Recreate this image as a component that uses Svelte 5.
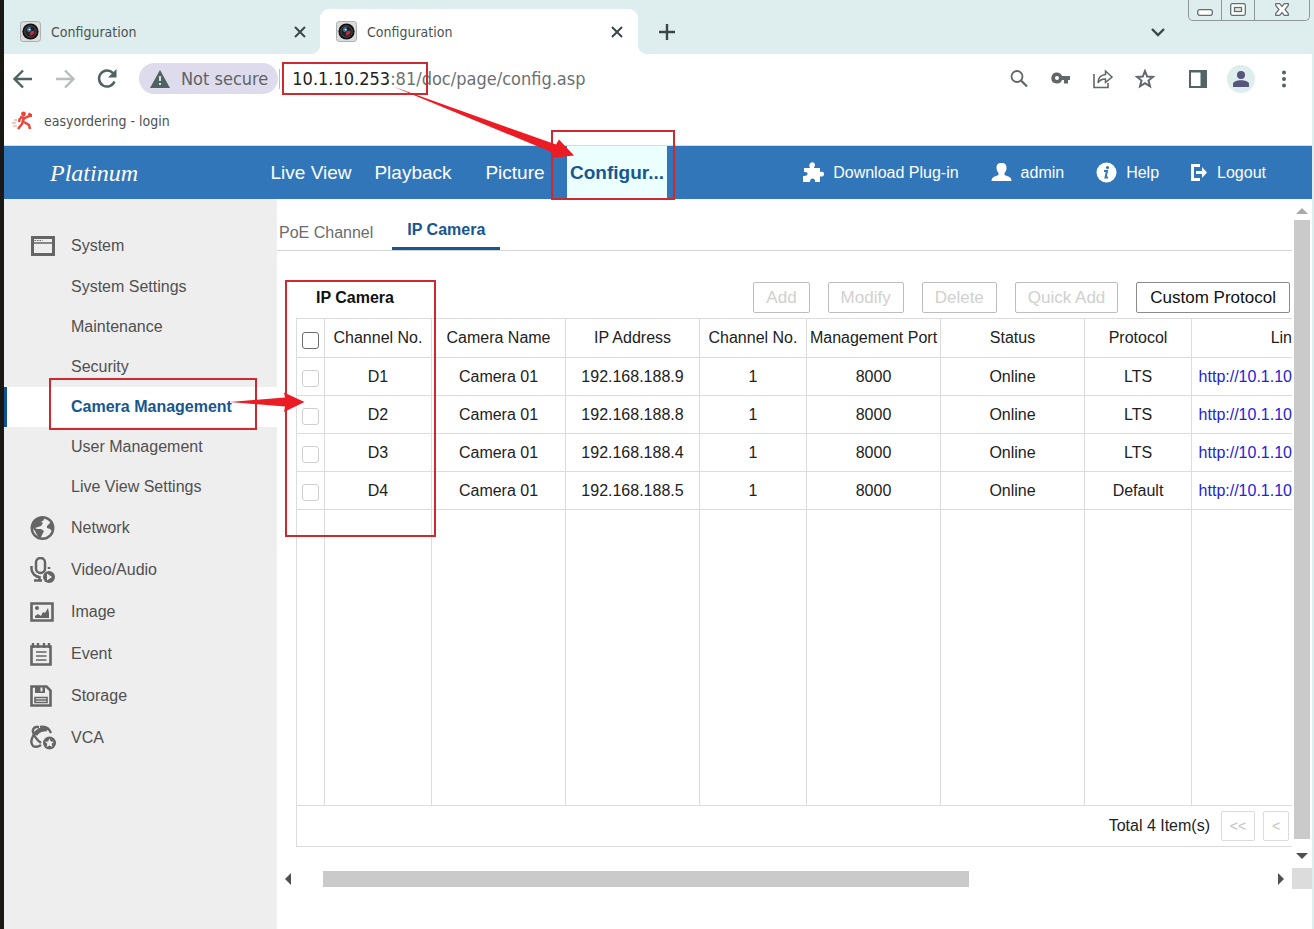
<script lang="ts">
    interface Camera {
        channel: string;
        name: string;
        address: string;
        remote: number;
        port: number;
        status: string;
        protocol: string;
        link: string;
    }

    const navItems = ["Live View", "Playback", "Picture", "Configur..."];
    const tools = [
        { icon: "plugin", label: "Download Plug-in" },
        { icon: "user", label: "admin" },
        { icon: "help", label: "Help" },
        { icon: "logout", label: "Logout" },
    ];
    const systemItems = [
        "System Settings",
        "Maintenance",
        "Security",
        "Camera Management",
        "User Management",
        "Live View Settings",
    ];
    const sections = [
        { icon: "network", label: "Network" },
        { icon: "audio", label: "Video/Audio" },
        { icon: "image", label: "Image" },
        { icon: "event", label: "Event" },
        { icon: "storage", label: "Storage" },
        { icon: "vca", label: "VCA" },
    ];
    const actions = ["Add", "Modify", "Delete", "Quick Add"];
    const columns = ["Channel No.", "Camera Name", "IP Address", "Channel No.", "Management Port", "Status", "Protocol", "Lin"];
    const cameras: Camera[] = [
        { channel: "D1", name: "Camera 01", address: "192.168.188.9", remote: 1, port: 8000, status: "Online", protocol: "LTS", link: "http://10.1.10" },
        { channel: "D2", name: "Camera 01", address: "192.168.188.8", remote: 1, port: 8000, status: "Online", protocol: "LTS", link: "http://10.1.10" },
        { channel: "D3", name: "Camera 01", address: "192.168.188.4", remote: 1, port: 8000, status: "Online", protocol: "LTS", link: "http://10.1.10" },
        { channel: "D4", name: "Camera 01", address: "192.168.188.5", remote: 1, port: 8000, status: "Online", protocol: "Default", link: "http://10.1.10" },
    ];

    let activeNav = $state("Configur...");
    let activeItem = $state("Camera Management");
</script>

{#snippet favicon()}
    <svg class="favicon" viewBox="0 0 22 22" aria-hidden="true">
        <rect x="0.5" y="0.5" width="21" height="21" rx="3" fill="#dcdcdc" stroke="#a8acac" />
        <circle cx="11" cy="11" r="8.5" fill="#111" />
        <circle cx="11" cy="11" r="6" fill="#1c1f24" stroke="#55585c" stroke-width="1" />
        <path d="M7 10a4 4 0 0 1 4-4l1 4-3 2z" fill="#3e6c8d" />
        <path d="M11 11l4-1a4 4 0 0 1-5 5z" fill="#b7343a" />
        <circle cx="10" cy="9" r="1" fill="#d9e6ee" />
    </svg>
{/snippet}

{#snippet cross()}
    <svg width="12" height="12" viewBox="0 0 12 12" aria-hidden="true">
        <path d="M1 1l10 10m0-10L1 11" stroke="#3c4646" stroke-width="2" />
    </svg>
{/snippet}

{#snippet icon(name: string)}
    <svg class="icon" viewBox="0 0 26 26" aria-hidden="true">
        {#if name === "system"}
            <path d="M2.500 4.500h21v17h-21z" fill="none" stroke="#656565" stroke-width="3" />
            <path d="M3 10h20" stroke="#656565" stroke-width="1.500" />
            <path d="M4.500 7.500h8" stroke="#656565" stroke-dasharray="1.500 1" />
        {:else if name === "network"}
            <circle cx="12.500" cy="13" r="10.700" fill="none" stroke="#656565" stroke-width="2.500" />
            <path d="M2 12l1-5 5-4 5-1 1 3-3 2 2 1-2 3-3 1-3 1 2 1h4l3 2-2 4-2 4-3-4-2-4z" fill="#656565" />
            <path d="M17 11l4-4 2 4-1 5-2-2-3-1z" fill="#656565" />
        {:else if name === "audio"}
            <rect x="6" y="1" width="9" height="15" rx="4.500" fill="none" stroke="#656565" stroke-width="2.500" />
            <path d="M1.500 9v3c0 4 4 8 8 8M19 10v2M4 23.500h8M9.500 19v4" fill="none" stroke="#656565" stroke-width="2.500" />
            <circle cx="19" cy="20" r="6" fill="#656565" />
            <path d="M17 16.500l5 3.500-5 3.500z" fill="#eee" />
        {:else if name === "image"}
            <path d="M1.500 4.500h21v17h-21z" fill="none" stroke="#656565" stroke-width="2.600" />
            <circle cx="7" cy="9" r="2" fill="#656565" />
            <path d="M5 19v-2l3-2 3 2 2-4 2 1 3-5 1 5v5z" fill="#656565" />
        {:else if name === "event"}
            <path d="M1.500 5.500h19v18h-19z" fill="none" stroke="#656565" stroke-width="2.600" />
            <path d="M3 2v5M8 2v5M14 2v5M19 2v5" stroke="#656565" stroke-width="2.400" />
            <path d="M6 11h10.500M6 15h10.500M6 19h10.500" stroke="#656565" stroke-width="1.600" />
        {:else if name === "storage"}
            <path d="M1.500 3.500h15l4 4v15h-19z" fill="none" stroke="#656565" stroke-width="2.600" />
            <path d="M5 3h10v7H5z" fill="#656565" />
            <path d="M10.500 4.500h2v4h-2z" fill="#eee" />
            <path d="M5 14.500h12v5H5zM5 17h12" fill="none" stroke="#656565" stroke-width="1.600" />
        {:else if name === "vca"}
            <path d="M9 2H6a4 4 0 0 0-3 5c1 4 4 8 8 11M18 4c-6-3-13 2-15 7-2 4-2 8 0 10 2 1 5 1 8-1M10 2c5-1 9 1 11 6M6 10c2-3 6-5 11-5" fill="none" stroke="#656565" stroke-width="2.400" />
            <circle cx="19.500" cy="18" r="6.500" fill="#656565" />
            <path d="M19.500 13.500l1.400 2.900 3.100.3-2.300 2.100.7 3.200-2.900-1.600-2.900 1.600.7-3.200-2.300-2.100 3.100-.3z" fill="#eee" />
        {/if}
    </svg>
{/snippet}

{#snippet toolIcon(name: string)}
    {#if name === "plugin"}
        <svg width="21" height="21" viewBox="0 0 21 21" fill="#fff" aria-hidden="true">
            <path d="M1 6h6c-3-6 5-8 5-3 0 1-1 2-1 3h6v4c1 0 4-1 4 2s-3 3-4 2v6h-5c1-4-5-5-5 0H0v-6c6 1 6-5 1-4z" />
        </svg>
    {:else if name === "user"}
        <svg width="21" height="21" viewBox="0 0 21 21" fill="#fff" aria-hidden="true">
            <path d="M10.500 1c4 0 5 2 5 5 0 2-1 4-2 5v2l5 2q2 1 2 4H.5q0-3 2-4l5-2v-2c-1-1-2-3-2-5 0-3 1-5 5-5z" />
        </svg>
    {:else if name === "help"}
        <svg width="21" height="21" viewBox="0 0 21 21" aria-hidden="true">
            <circle cx="10.500" cy="10.500" r="10" fill="#fff" />
            <circle cx="11.500" cy="5.500" r="1.600" fill="#3276ba" />
            <path d="M8 9h3l-1.500 6.500H12" fill="none" stroke="#3276ba" stroke-width="2" />
        </svg>
    {:else}
        <svg width="17" height="21" viewBox="0 0 17 21" fill="#fff" aria-hidden="true">
            <path d="M0 2h9v3H3v11h6v3H0z" />
            <path d="M5 9h6V5l5 5.500-5 5.500v-4H5z" />
        </svg>
    {/if}
{/snippet}

<div class="window">
    <header class="tabstrip">
        <div class="browser-tab">
            {@render favicon()}
            <span>Configuration</span>
            <button class="plain" aria-label="Close tab">{@render cross()}</button>
        </div>
        <div class="browser-tab current">
            {@render favicon()}
            <span>Configuration</span>
            <button class="plain" aria-label="Close tab">{@render cross()}</button>
        </div>
        <button class="plain new-tab" aria-label="New tab">
            <svg width="16" height="16" viewBox="0 0 16 16"><path d="M8 0v16M0 8h16" stroke="#3c4646" stroke-width="2.400" /></svg>
        </button>
        <button class="plain search-tabs" aria-label="Search tabs">
            <svg width="14" height="10" viewBox="0 0 14 10"><path d="M1 2l6 6 6-6" fill="none" stroke="#3c4646" stroke-width="2.400" /></svg>
        </button>
        <div class="window-controls">
            <button aria-label="Minimize">
                <svg width="16" height="7" viewBox="0 0 16 7"><rect x="0.700" y="0.700" width="14.600" height="5.600" rx="2" fill="#fff" stroke="#666d6d" stroke-width="1.300" /></svg>
            </button>
            <button aria-label="Restore">
                <svg width="16" height="13" viewBox="0 0 16 13"><rect x="0.700" y="0.700" width="14.600" height="11.600" rx="1.500" fill="#fff" stroke="#666d6d" stroke-width="1.300" /><rect x="4.500" y="4.500" width="7" height="4" fill="#deeeee" stroke="#666d6d" stroke-width="1.300" /></svg>
            </button>
            <button class="wide" aria-label="Close">
                <svg width="14" height="13" viewBox="0 0 14 13"><path d="M.7.7h4L7 3.500 9.300.7h4v1.800L10 6.500l3.300 4v1.800h-4L7 9.500l-2.300 2.800h-4v-1.800L4 6.500l-3.300-4z" fill="#fff" stroke="#666d6d" stroke-width="1.200" /></svg>
            </button>
        </div>
    </header>

    <div class="toolbar">
        <div class="history">
            <button class="plain" aria-label="Back">
                <svg width="20" height="20" viewBox="0 0 20 20"><path d="M19 10H2M10 1.500L1.500 10l8.500 8.500" fill="none" stroke="#4f6262" stroke-width="2.400" /></svg>
            </button>
            <button class="plain" aria-label="Forward">
                <svg width="20" height="20" viewBox="0 0 20 20"><path d="M1 10h17M10 1.500l8.500 8.500-8.500 8.500" fill="none" stroke="#b9bdbd" stroke-width="2.400" /></svg>
            </button>
            <button class="plain" aria-label="Reload">
                <svg width="20" height="20" viewBox="0 0 20 20"><path d="M17.500 12.500a8 8 0 1 1-1.500-8.300" fill="none" stroke="#4f6262" stroke-width="2.500" /><path d="M19.500 0v8.500H11z" fill="#4f6262" /></svg>
            </button>
        </div>
        <button class="security">
            <svg width="20" height="18" viewBox="0 0 20 18" aria-hidden="true"><path d="M10 0l10 18H0z" fill="#4f6262" /><path d="M10 6v5M10 13v2" stroke="#dedcec" stroke-width="2" /></svg>
            Not secure
        </button>
        <div class="address" role="textbox" tabindex="0" contenteditable="true" aria-label="Address"><span class="host">10.1.10.253</span>:81/doc/page/config.asp</div>
        <div class="browser-actions">
            <button class="plain" aria-label="Zoom">
                <svg width="20" height="20" viewBox="0 0 20 20"><circle cx="8" cy="7.500" r="5.500" fill="none" stroke="#616767" stroke-width="1.800" /><path d="M12 11.500l6 6" stroke="#616767" stroke-width="2.300" /></svg>
            </button>
            <button class="plain" aria-label="Passwords">
                <svg width="20" height="20" viewBox="0 0 20 20"><path d="M6 3.500a5.500 5.500 0 0 1 5 3.500h8v4h-2v3.500h-4V11h-2A5.500 5.500 0 1 1 6 3.500zM6 7a2 2 0 1 0 0 4 2 2 0 0 0 0-4z" fill="#616767" fill-rule="evenodd" /></svg>
            </button>
            <button class="plain" aria-label="Share">
                <svg width="20" height="20" viewBox="0 0 20 20"><path d="M1 5v13.500h14V14" fill="none" stroke="#616767" stroke-width="1.600" /><path d="M12.500 2l6.500 6-6.500 5.500V10c-4 0-6 1-7.500 4 0-5 3-8 7.500-8.500z" fill="none" stroke="#616767" stroke-width="1.500" /></svg>
            </button>
            <button class="plain" aria-label="Bookmark">
                <svg width="20" height="20" viewBox="0 0 20 20"><path d="M10 2l2.200 5.500 5.800.4-4.500 3.700 1.500 5.800-5-3.200-5 3.200 1.500-5.800L2 7.900l5.800-.4z" fill="none" stroke="#616767" stroke-width="2" /></svg>
            </button>
            <button class="plain spaced" aria-label="Side panel">
                <svg width="20" height="20" viewBox="0 0 20 20"><path d="M1 1h18v18H1z" fill="#526464" /><path d="M3 3.500h9.500v13.500H3z" fill="#fff" /></svg>
            </button>
            <button class="plain avatar" aria-label="Profile">
                <svg width="16" height="16" viewBox="0 0 16 16"><circle cx="8" cy="4" r="4" fill="#56567b" /><path d="M0 16v-3c0-5 16-5 16 0v3z" fill="#56567b" /></svg>
            </button>
            <button class="plain" aria-label="Menu">
                <svg width="20" height="20" viewBox="0 0 20 20" fill="#526464"><circle cx="10" cy="3.500" r="2" /><circle cx="10" cy="10" r="2" /><circle cx="10" cy="16.500" r="2" /></svg>
            </button>
        </div>
    </div>

    <div class="bookmarks">
        <a href="#login">
            <svg width="22" height="20" viewBox="0 0 22 20" aria-hidden="true">
                <circle cx="11.500" cy="3" r="2.400" fill="#e8453c" />
                <path d="M8 6l5 1 4-2 1-3M12 7l-2 6-4 5M12 11l5 3 1 4M8 7l-1 4" fill="none" stroke="#e8453c" stroke-width="2.500" />
                <path d="M16 3h4v3h-4z" fill="#e8453c" />
                <path d="M5 9H2M4 12H0M5 15H1" stroke="#f3b4ae" stroke-width="1.500" />
            </svg>
            easyordering - login
        </a>
    </div>

    <nav class="navbar">
        <div class="brand">Platinum</div>
        <div class="nav-items">
            {#each navItems as item}
                <a href="#nav" class:active={item === activeNav} onclick={() => activeNav = item}>{item}</a>
            {/each}
        </div>
        <div class="tools">
            {#each tools as tool}
                <a href="#tool">{@render toolIcon(tool.icon)}{tool.label}</a>
            {/each}
        </div>
    </nav>

    <div class="page">
        <aside>
            <a class="section" href="#system">{@render icon("system")}System</a>
            {#each systemItems as item}
                <a class="item" class:active={item === activeItem} href="#item" onclick={() => activeItem = item}>{item}</a>
            {/each}
            {#each sections as section}
                <a class="section" href="#section">{@render icon(section.icon)}{section.label}</a>
            {/each}
        </aside>

        <main>
            <div class="content">
                <div class="subtabs">
                    <a href="#poe">PoE Channel</a>
                    <a class="active" href="#ip">IP Camera</a>
                </div>

                <div class="panel">
                    <div class="panel-head">
                        <h2>IP Camera</h2>
                        {#each actions as action}
                            <button disabled>{action}</button>
                        {/each}
                        <button>Custom Protocol</button>
                    </div>

                    <table>
                        <colgroup>
                            <col class="check" />
                            <col class="narrow" />
                            <col class="medium" />
                            <col class="medium" />
                            <col class="narrow" />
                            <col class="medium" />
                            <col class="large" />
                            <col class="narrow" />
                            <col />
                        </colgroup>
                        <thead>
                            <tr>
                                <th><input type="checkbox" aria-label="Select all" /></th>
                                {#each columns as column}
                                    <th>{column}</th>
                                {/each}
                            </tr>
                        </thead>
                        <tbody>
                            {#each cameras as camera}
                                <tr>
                                    <td><input type="checkbox" disabled aria-label={camera.channel} /></td>
                                    <td>{camera.channel}</td>
                                    <td>{camera.name}</td>
                                    <td>{camera.address}</td>
                                    <td>{camera.remote}</td>
                                    <td>{camera.port}</td>
                                    <td>{camera.status}</td>
                                    <td>{camera.protocol}</td>
                                    <td><a href={camera.link}>{camera.link}</a></td>
                                </tr>
                            {/each}
                            <tr class="filler">
                                <td></td><td></td><td></td><td></td><td></td><td></td><td></td><td></td><td></td>
                            </tr>
                        </tbody>
                    </table>
                    <div class="pager">
                        <span>Total {cameras.length} Item(s)</span>
                        <button class="first" disabled>&lt;&lt;</button>
                        <button disabled>&lt;</button>
                    </div>
                </div>
            </div>

            <div class="scroll-y">
                <svg width="12" height="6" viewBox="0 0 12 6"><path d="M0 6l6-6 6 6z" fill="#a9a9a9" /></svg>
                <div class="thumb"></div>
                <svg width="12" height="6" viewBox="0 0 12 6"><path d="M0 0l6 6 6-6z" fill="#505050" /></svg>
            </div>
            <div class="scroll-x">
                <svg width="6" height="12" viewBox="0 0 6 12"><path d="M6 0L0 6l6 6z" fill="#505050" /></svg>
                <div class="track"><div class="thumb"></div></div>
                <svg width="6" height="12" viewBox="0 0 6 12"><path d="M0 0l6 6-6 6z" fill="#505050" /></svg>
            </div>
            <div class="corner"></div>
        </main>
    </div>

    <!-- callouts drawn over the page -->
    <svg class="callouts" width="1314" height="929" viewBox="0 0 1314 929" aria-hidden="true">
        <g fill="none" stroke="#cc2a30" stroke-width="2">
            <rect x="283" y="63" width="144" height="31" />
            <rect x="552" y="131" width="122" height="68" />
            <rect x="50" y="379" width="206" height="50" />
            <rect x="286" y="281" width="149" height="255" />
        </g>
        <g fill="#ec1c24">
            <path d="M393 86.500L556 144.500 559 139.500 574 155.500 552 158 552.500 152.500z" />
            <path d="M230 402L285 397.500 284 392.500 304.500 402 284 412 285 406.500z" />
        </g>
    </svg>
</div>

<style>

    :global(body) {
        margin: 0;
    }

    .window {
        position: relative;
        display: flex;
        flex-direction: column;
        box-sizing: border-box;
        min-height: 100vh;
        overflow: hidden;
        border-left: 4px solid #1a1814;
        border-right: 2px solid #deeeee;
        background: #fff;
        font: 16px/20px "Liberation Sans", Arial, sans-serif;
        color: #222;
    }

    a {
        color: inherit;
        text-decoration: none;
    }

    button {
        font: inherit;
        cursor: pointer;
    }

    svg {
        display: block;
        flex-shrink: 0;
    }

    .plain {
        display: flex;
        align-items: center;
        justify-content: center;
        padding: 0;
        border: 0;
        background: none;
    }

    .tabstrip,
    .toolbar,
    .bookmarks {
        font-family: "DejaVu Sans Condensed", Tahoma, "Noto Sans", sans-serif;
        color: #4b5252;
    }

    /* browser tabs */
    .tabstrip {
        display: flex;
        align-items: flex-end;
        height: 54px;
        background: #deeeee;
        font-size: 14px;
    }

    .browser-tab {
        display: flex;
        align-items: center;
        gap: 10px;
        box-sizing: border-box;
        width: 316px;
        height: 45px;
        padding: 0 14px 0 16px;
    }

    .browser-tab .plain {
        margin-left: auto;
    }

    .browser-tab.current {
        position: relative;
        width: 318px;
        padding-right: 15px;
        border-radius: 9px 9px 0 0;
        background: #fff;
    }

    .browser-tab.current::before,
    .browser-tab.current::after {
        content: '';
        position: absolute;
        bottom: 0;
        width: 9px;
        height: 9px;
    }

    .browser-tab.current::before {
        right: 100%;
        background: radial-gradient(circle at 0 0, #deeeee 9px, #fff 9px);
    }

    .browser-tab.current::after {
        left: 100%;
        background: radial-gradient(circle at 100% 0, #deeeee 9px, #fff 9px);
    }

    .favicon {
        width: 21px;
        height: 21px;
    }

    .new-tab {
        height: 45px;
        margin-left: 21px;
    }

    .search-tabs {
        height: 45px;
        margin-left: auto;
    }

    .window-controls {
        display: flex;
        align-self: flex-start;
        margin: 0 2px 0 23px;
        border: 1px solid #8e9898;
        border-top: 0;
        border-radius: 0 0 5px 5px;
    }

    .window-controls button {
        display: flex;
        align-items: flex-end;
        justify-content: center;
        width: 33px;
        height: 20px;
        padding: 0 0 4px;
        border: 0;
        border-right: 1px solid #8e9898;
        background: none;
    }

    .window-controls .wide {
        width: 54px;
        border-right: 0;
    }

    /* address row */
    .toolbar {
        display: flex;
        align-items: center;
        height: 49px;
        font-size: 18px;
    }

    .history {
        display: flex;
        gap: 22px;
        padding: 0 22px 0 9px;
    }

    .security {
        display: flex;
        align-items: center;
        gap: 11px;
        height: 31px;
        padding: 0 10px 0 11px;
        border: 0;
        border-radius: 16px;
        background: #dedcec;
        color: #5f6368;
        white-space: nowrap;
    }

    .address {
        flex: 1;
        margin-left: 1px;
        padding-left: 12px;
        border-left: 1px solid #b9bdc4;
        outline: 0;
        color: #6c7073;
        white-space: nowrap;
    }

    .host {
        color: #222;
    }

    .browser-actions {
        display: flex;
        align-items: center;
        gap: 22px;
        padding-right: 18px;
    }

    .spaced {
        margin-left: 11px;
    }

    .avatar {
        width: 28px;
        height: 28px;
        margin: 0 -3px;
        border-radius: 50%;
        background: #deeeee;
    }

    .bookmarks {
        height: 42px;
        border-bottom: 1px solid #d5dbe0;
        font-size: 14px;
    }

    .bookmarks a {
        display: flex;
        align-items: center;
        gap: 10px;
        height: 36px;
        padding-left: 8px;
    }

    /* application bar */
    .navbar {
        display: flex;
        align-items: center;
        height: 53px;
        background: #3276ba;
        color: #fff;
    }

    .brand {
        width: 211px;
        padding-left: 46px;
        font: italic 24px/28px "Brush Script MT", "Liberation Serif", serif;
    }

    .nav-items {
        display: flex;
        gap: 2px;
        height: 100%;
        font-size: 19px;
        line-height: 53px;
    }

    .nav-items a {
        width: 100px;
        text-align: center;
        white-space: nowrap;
    }

    .nav-items .active {
        background: #ebffff;
        color: #17568f;
        font-weight: bold;
    }

    .tools {
        display: flex;
        gap: 32px;
        margin-left: auto;
        padding-right: 46px;
    }

    .tools a {
        display: flex;
        align-items: center;
        gap: 9px;
        white-space: nowrap;
    }

    .page {
        display: flex;
        flex: 1;
    }

    /* sidebar */
    aside {
        flex: none;
        width: 273px;
        padding-top: 26px;
        box-sizing: border-box;
        background: #eee;
        color: #505050;
    }

    .section {
        display: flex;
        align-items: center;
        gap: 15px;
        height: 42px;
        padding-left: 26px;
    }

    .icon {
        width: 26px;
        height: 26px;
    }

    .item {
        display: block;
        height: 40px;
        padding-left: 67px;
        line-height: 40px;
    }

    .item.active {
        padding-left: 64px;
        border-left: 3px solid #10548e;
        background: #fff;
        color: #17568f;
        font-weight: bold;
    }

    /* content */
    main {
        display: grid;
        flex: 1;
        grid-template-columns: minmax(0, 1fr) 20px;
        grid-template-rows: auto 21px;
        align-content: start;
    }

    .subtabs {
        display: flex;
        align-items: flex-end;
        height: 51px;
        border-bottom: 1px solid #d5d5d5;
    }

    .subtabs a {
        padding: 0 2px 7px;
        color: #6c6c6c;
    }

    .subtabs .active {
        margin-left: 17px;
        padding: 0 15px 7px;
        border-bottom: 3px solid #17568f;
        color: #17568f;
        font-weight: bold;
    }

    .panel {
        padding: 31px 0 21px 19px;
    }

    .panel-head {
        display: flex;
        align-items: center;
        gap: 18px;
        padding: 0 2px 5px 20px;
    }

    h2 {
        margin: 0 auto 0 0;
        color: #111;
        font-size: 16px;
        line-height: 20px;
    }

    .panel-head button {
        height: 31px;
        padding: 0 13px;
        border: 1px solid #8c8c8c;
        border-radius: 2px;
        background: #fff;
        color: #111;
        font-size: 17px;
        white-space: nowrap;
    }

    .panel-head button:disabled {
        padding: 0 12px;
        border-color: #bdbdbd;
        color: #d0d0d0;
    }

    table {
        width: 100%;
        table-layout: fixed;
        border-collapse: collapse;
        border-top: 1px solid #dcdcdc;
    }

    .check {
        width: 28px;
    }

    .narrow {
        width: 107px;
    }

    .medium {
        width: 134px;
    }

    .large {
        width: 144px;
    }

    th,
    td {
        height: 37px;
        padding: 0;
        border-bottom: 1px solid #dcdcdc;
        border-left: 1px solid #dcdcdc;
        font-weight: normal;
        text-align: center;
        white-space: nowrap;
    }

    th {
        height: 38px;
    }

    th:last-child,
    td:last-child {
        text-align: right;
    }

    td a {
        color: #2323d8;
    }

    .filler td {
        height: 295px;
    }

    input[type="checkbox"] {
        display: block;
        appearance: none;
        box-sizing: border-box;
        width: 17px;
        height: 17px;
        margin: 4px auto 0;
        border: 1px solid #6b6b6b;
        border-radius: 3px;
        background: #fff;
    }

    input[type="checkbox"]:disabled {
        border-color: #cfcfcf;
    }

    .pager {
        display: flex;
        align-items: center;
        justify-content: flex-end;
        gap: 8px;
        height: 40px;
        padding-right: 3px;
        border-bottom: 1px solid #dcdcdc;
        border-left: 1px solid #dcdcdc;
    }

    .pager button {
        width: 26px;
        height: 30px;
        padding: 0;
        border: 1px solid #dcdcdc;
        border-radius: 2px;
        background: #fff;
        color: #c4c4c4;
        font-size: 14px;
    }

    .pager .first {
        width: 34px;
        margin-left: 3px;
    }

    /* scrollbars */
    .scroll-y {
        display: flex;
        flex-direction: column;
        align-items: center;
        padding: 9px 0;
    }

    .scroll-y .thumb {
        flex: 1;
        width: 16px;
        margin: 6px 0 14px;
        background: #cacaca;
    }

    .scroll-x {
        display: flex;
        align-items: center;
        justify-content: space-between;
        gap: 32px;
        padding: 0 8px;
    }

    .track {
        flex: 1;
    }

    .track .thumb {
        width: 70%;
        height: 16px;
        background: #cacaca;
    }

    .corner {
        background: #dcdcdc;
    }

    .callouts {
        position: absolute;
        top: 0;
        left: -4px;
        pointer-events: none;
    }

</style>
